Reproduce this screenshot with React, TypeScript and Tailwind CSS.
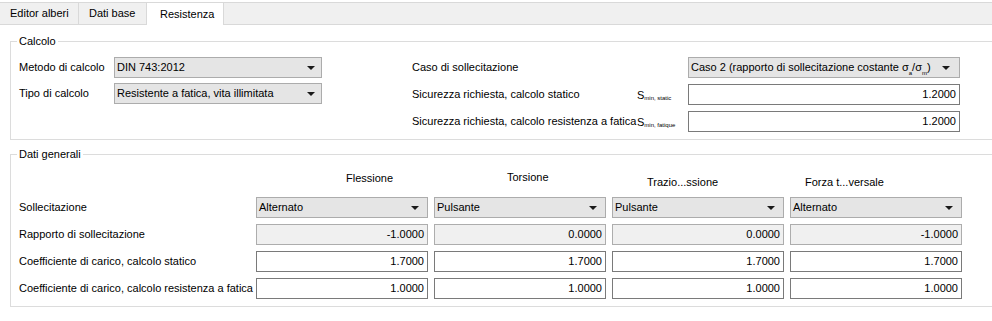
import React from "react";

const LABEL = "font-['Liberation_Sans',Arial,sans-serif] text-[11px] text-[#000] whitespace-nowrap";
const VALUE = "font-['Liberation_Sans',Arial,sans-serif] text-[11px] text-[#000]";

function Arrow() {
  return (
    <svg width="8" height="4" viewBox="0 0 8 4" className="shrink-0">
      <polygon points="0,0 8,0 4,4" fill="#1a1a1a" />
    </svg>
  );
}

function Dropdown({ children, arrowPad = "pr-[7px]" }: { children: React.ReactNode; arrowPad?: string }) {
  return (
    <div className={`h-[21px] flex items-center justify-between bg-[#e5e5e5] border border-[#acacac] pl-[2px] ${arrowPad} ${VALUE} leading-[19px] whitespace-nowrap overflow-hidden`}>
      <span>{children}</span>
      <Arrow />
    </div>
  );
}

function Field({ value, readOnly = false }: { value: string; readOnly?: boolean }) {
  return (
    <div
      className={`h-[21px] flex items-center justify-end pr-[3px] border ${
        readOnly ? "bg-[#f0f0f0] border-[#adadad]" : "bg-white border-[#7a7a7a]"
      } ${VALUE} leading-[19px]`}
    >
      {value}
    </div>
  );
}

function Smin({ sub }: { sub: string }) {
  return (
    <div className="h-[21px] flex items-center font-['Liberation_Sans',Arial,sans-serif] text-[11px] leading-[13px] whitespace-nowrap">
      <span className="pt-[2px]">S</span>
      <span className="text-[6px] leading-[6px] pt-[7px]">{sub}</span>
    </div>
  );
}

export default function App() {
  return (
    <div className="w-[992px] h-[321px] bg-white overflow-hidden">
      {/* Tab bar */}
      <div className="mt-[2px] h-[23px] flex border-t border-[#d9d9d9]">
        <div className={`w-[79px] flex items-center pl-[10px] bg-[#f0f0f0] border-r border-b border-[#d9d9d9] ${LABEL}`}>
          Editor alberi
        </div>
        <div className={`w-[68px] flex items-center pl-[10px] bg-[#f0f0f0] border-r border-b border-[#d9d9d9] ${LABEL}`}>
          Dati base
        </div>
        <div className={`w-[77px] flex items-center pl-[13px] bg-white border-r border-[#d9d9d9] ${LABEL}`}>
          Resistenza
        </div>
        <div className="flex-1 bg-[#f0f0f0] border-b border-[#d9d9d9]" />
      </div>

      {/* Calcolo */}
      <fieldset className="mt-[8px] ml-[10px] border border-r-0 border-[#dcdcdc] pl-[8px] pt-[8px] pb-[7px]">
        <legend className={`${LABEL} leading-[16px] px-[2px] ml-[-2px]`}>Calcolo</legend>
        <div className="flex items-start">
          <div className="grid grid-cols-[95px_208px] gap-y-[5px] items-center">
            <div className={`${LABEL}`}>Metodo di calcolo</div>
            <Dropdown arrowPad="pr-[6px]">DIN 743:2012</Dropdown>
            <div className={`${LABEL}`}>Tipo di calcolo</div>
            <Dropdown arrowPad="pr-[6px]">Resistente a fatica, vita illimitata</Dropdown>
          </div>
          <div className="ml-[90px] grid grid-cols-[225px_51px_272px] gap-y-[6px] items-center">
            <div className={`${LABEL}`}>Caso di sollecitazione</div>
            <div />
            <Dropdown arrowPad="pr-[9px]">
              Caso 2 (rapporto di sollecitazione costante σ<sub className="text-[6px] align-[-2px]">a</sub>/σ
              <sub className="text-[6px] align-[-2px]">m</sub>)
            </Dropdown>
            <div className={`${LABEL}`}>Sicurezza richiesta, calcolo statico</div>
            <Smin sub="min, static" />
            <Field value="1.2000" />
            <div className={`${LABEL}`}>Sicurezza richiesta, calcolo resistenza a fatica</div>
            <Smin sub="min, fatique" />
            <Field value="1.2000" />
          </div>
        </div>
      </fieldset>

      {/* Dati generali */}
      <fieldset className="mt-[6px] ml-[10px] border border-r-0 border-[#dcdcdc] pl-[8px] pt-0 pb-[7px]">
        <legend className={`${LABEL} leading-[16px] px-[2px] ml-[-2px]`}>Dati generali</legend>
        <div className="grid grid-cols-[231px_172px_172px_172px_172px] grid-rows-[29px_21px_21px_21px_21px] gap-x-[6px] gap-y-[6px] items-center">
          <div />
          <div className={`${LABEL} self-start pt-[8px] pl-[90px]`}>Flessione</div>
          <div className={`${LABEL} self-start pt-[7px] pl-[73px]`}>Torsione</div>
          <div className={`${LABEL} self-start pt-[12px] pl-[35px]`}>Trazio...ssione</div>
          <div className={`${LABEL} self-start pt-[12px] pl-[15px]`}>Forza t...versale</div>

          <div className={`${LABEL}`}>Sollecitazione</div>
          <Dropdown arrowPad="pr-[8px]">Alternato</Dropdown>
          <Dropdown arrowPad="pr-[8px]">Pulsante</Dropdown>
          <Dropdown arrowPad="pr-[8px]">Pulsante</Dropdown>
          <Dropdown arrowPad="pr-[8px]">Alternato</Dropdown>

          <div className={`${LABEL}`}>Rapporto di sollecitazione</div>
          <Field value="-1.0000" readOnly />
          <Field value="0.0000" readOnly />
          <Field value="0.0000" readOnly />
          <Field value="-1.0000" readOnly />

          <div className={`${LABEL}`}>Coefficiente di carico, calcolo statico</div>
          <Field value="1.7000" />
          <Field value="1.7000" />
          <Field value="1.7000" />
          <Field value="1.7000" />

          <div className={`${LABEL}`}>Coefficiente di carico, calcolo resistenza a fatica</div>
          <Field value="1.0000" />
          <Field value="1.0000" />
          <Field value="1.0000" />
          <Field value="1.0000" />
        </div>
      </fieldset>
    </div>
  );
}
